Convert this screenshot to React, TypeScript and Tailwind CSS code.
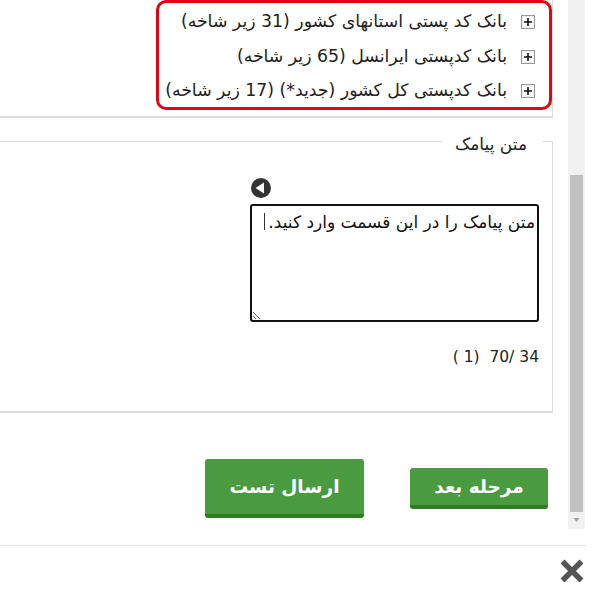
const banks = [
    'بانک کد پستی استانهای کشور (31 زیر شاخه)',
    'بانک کدپستی ایرانسل (65 زیر شاخه)',
    'بانک کدپستی کل کشور (جدید*) (17 زیر شاخه)',
];

const PlusBox = () => (
    <svg width="14" height="14" viewBox="0 0 14 14" className="shrink-0">
        <rect x="0.5" y="0.5" width="13" height="13" fill="#eeeeee" stroke="#9a9a9a" />
        <rect x="2" y="2" width="10" height="10" fill="#ffffff" />
        <path d="M3 7h8M7 3v8" stroke="#111111" strokeWidth="1.6" />
    </svg>
);

const App = () => {
    return (
        <div className="w-[600px] h-[600px] bg-white overflow-hidden flex flex-col font-['DejaVu_Sans',sans-serif] text-[#222]">
            <div className="h-[546px] flex border-b border-[#e2e2e2] w-[586px]">
                <div className="w-[568px] flex flex-col">
                    <div className="w-[553px] h-[118px] border-r border-b-2 border-[#dddddd]">
                        <div dir="rtl" className="ml-[156px] w-[396px] h-[110px] border-[3px] border-[#e8000d] rounded-[10px] flex flex-col pt-[8px] pr-[14px] gap-[12.5px]">
                            {banks.map(b => (
                                <div key={b} className="flex items-center gap-[14px] h-[22px] text-[17.3px] whitespace-nowrap">
                                    <PlusBox />
                                    <span>{b}</span>
                                </div>
                            ))}
                        </div>
                    </div>

                    <fieldset dir="rtl" className="w-[555px] ml-[-2px] mt-[11px] h-[284px] border border-[#dddddd] border-b-2">
                        <legend className="mr-[9px] pr-[16px] pl-[13px] pt-[6px] text-[17px] leading-[18px]">متن پیامک</legend>
                        <div className="pr-[13px]">
                            <div dir="ltr" className="w-[289px] mt-[24px] relative">
                                <svg width="22" height="22" viewBox="0 0 22 22" className="mb-[5px]">
                                    <circle cx="11" cy="11" r="10" fill="#333333" />
                                    <path d="M5.5 11 14 5.5v11z" fill="#ffffff" />
                                </svg>
                                <textarea
                                    dir="rtl"
                                    readOnly
                                    defaultValue="متن پیامک را در این قسمت وارد کنید."
                                    className="block w-[289px] h-[118px] border-2 border-[#111] rounded-[3px] px-[2px] py-[4px] text-[17px] leading-[24px] text-[#111] outline-none"
                                />
                                <span className="absolute left-[14px] top-[36px] w-px h-[17px] bg-[#333]" />
                            </div>
                            <p dir="ltr" className="w-[289px] mt-[25px] text-right text-[15.5px] leading-[20px] whitespace-pre">( 1)  70/ 34</p>
                        </div>
                    </fieldset>

                    <div dir="rtl" className="w-[548px] flex items-start mt-[46px] gap-[46px]">
                        <button className="w-[138px] h-[41px] mt-[9px] bg-[#4a9a40] border-b-4 border-[#2e7d22] rounded-[3px] text-white font-bold text-[18.5px] leading-[36px]">مرحله بعد</button>
                        <button className="w-[159px] h-[59px] bg-[#4a9a40] border-b-4 border-[#2e7d22] rounded-[3px] text-white font-bold text-[18.5px]">ارسال تست</button>
                    </div>
                </div>

                <div className="w-[17px] h-[529px] bg-[#f1f1f1] flex flex-col">
                    <div className="mt-[175px] mx-[2px] h-[337px] bg-[#c1c1c1]" />
                    <svg width="17" height="17" viewBox="0 0 17 17">
                        <path d="M5.5 6h6l-3 4z" fill="#a3a3a3" />
                    </svg>
                </div>
            </div>

            <div className="flex justify-end pr-[15px] pt-[12px]">
                <svg width="26" height="26" viewBox="0 0 26 26">
                    <path d="M3.5 3.5l19 19M22.5 3.5l-19 19" stroke="#555555" strokeWidth="5.5" />
                </svg>
            </div>
        </div>
    );
};

export default App;
